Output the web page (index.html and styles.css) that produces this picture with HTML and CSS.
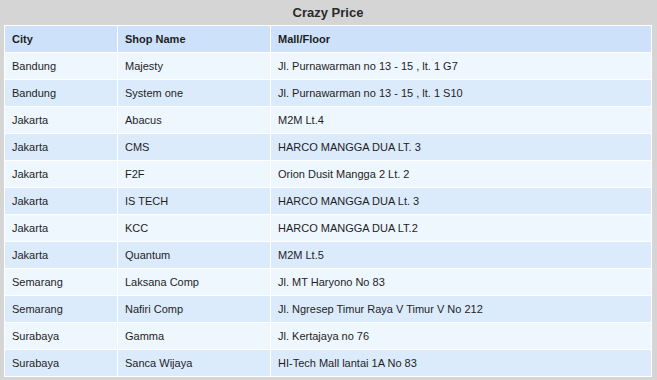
FILE: index.html
```html
<!DOCTYPE html>
<html>
<head>
<meta charset="utf-8">
<link rel="stylesheet" href="styles.css">
</head>
<body>
<div class="wrap">
  <div class="title">Crazy Price</div>
  <table class="price">
    <colgroup><col class="c1"><col class="c2"><col class="c3"></colgroup>
    <thead>
      <tr><th>City</th><th>Shop Name</th><th>Mall/Floor</th></tr>
    </thead>
    <tbody>
      <tr><td>Bandung</td><td>Majesty</td><td>Jl. Purnawarman no 13 - 15 , lt. 1 G7</td></tr>
      <tr><td>Bandung</td><td>System one</td><td>Jl. Purnawarman no 13 - 15 , lt. 1 S10</td></tr>
      <tr><td>Jakarta</td><td>Abacus</td><td>M2M Lt.4</td></tr>
      <tr><td>Jakarta</td><td>CMS</td><td>HARCO MANGGA DUA LT. 3</td></tr>
      <tr><td>Jakarta</td><td>F2F</td><td>Orion Dusit Mangga 2 Lt. 2</td></tr>
      <tr><td>Jakarta</td><td>IS TECH</td><td>HARCO MANGGA DUA Lt. 3</td></tr>
      <tr><td>Jakarta</td><td>KCC</td><td>HARCO MANGGA DUA LT.2</td></tr>
      <tr><td>Jakarta</td><td>Quantum</td><td>M2M Lt.5</td></tr>
      <tr><td>Semarang</td><td>Laksana Comp</td><td>Jl. MT Haryono No 83</td></tr>
      <tr><td>Semarang</td><td>Nafiri Comp</td><td>Jl. Ngresep Timur Raya V Timur V No 212</td></tr>
      <tr><td>Surabaya</td><td>Gamma</td><td>Jl. Kertajaya no 76</td></tr>
      <tr><td>Surabaya</td><td>Sanca Wijaya</td><td>HI-Tech Mall lantai 1A No 83</td></tr>
    </tbody>
  </table>
</div>
</body>
</html>
```
FILE: styles.css
```css
html, body {
  margin: 0;
  padding: 0;
  background: #d5d5d5;
}
.wrap {
  padding: 0 5px 0 4px;
  font-family: "Liberation Sans", Arial, sans-serif;
  color: #1e1e1e;
}
.title {
  height: 25px;
  line-height: 26px;
  text-align: center;
  font-weight: bold;
  font-size: 13px;
  color: #2a2a2a;
}
.price {
  width: 100%;
  border-collapse: collapse;
  border: 1px solid #fff;
  font-size: 11px;
}
.c1 { width: 113px; }
.c2 { width: 153px; }
.price th, .price td {
  border: 1px solid #fff;
  text-align: left;
  padding: 0 0 0 7px;
  height: 27px;
  box-sizing: border-box;
  vertical-align: middle;
}
.price th {
  background: #cde2fa;
  font-weight: bold;
  height: 27px;
}
.price tbody tr:nth-child(odd) td { background: #eef6fe; }
.price tbody tr:nth-child(even) td { background: #dcebfc; }
```
